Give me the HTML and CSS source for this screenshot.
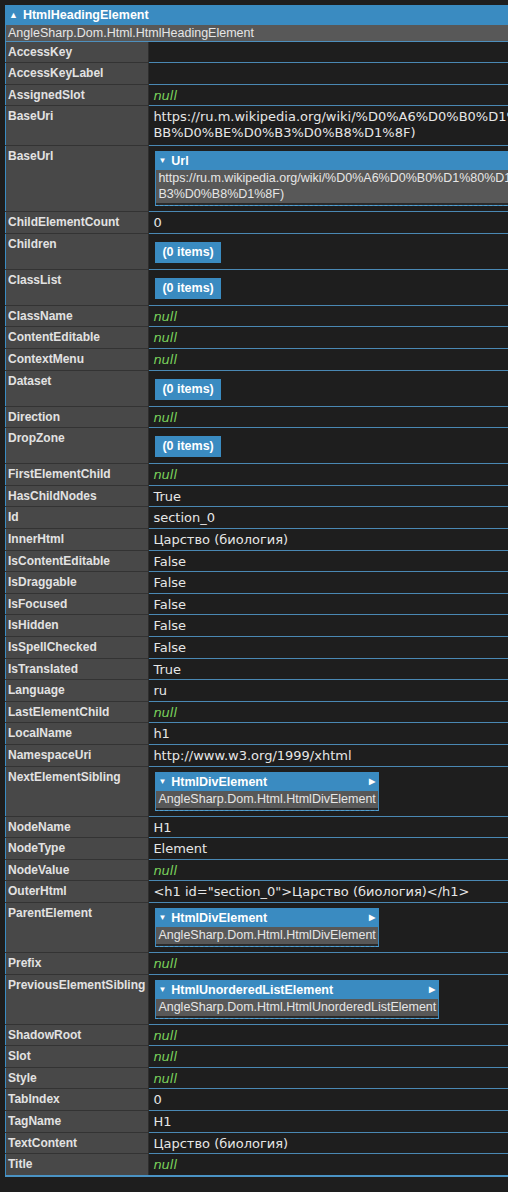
FILE: index.html
```html
<!DOCTYPE html>
<html>
<head>
<meta charset="utf-8">
<link rel="stylesheet" href="styles.css">
</head>
<body>
<table class="dump">
<thead>
<tr><td colspan="2" class="head"><span class="tri">▲</span>HtmlHeadingElement</td></tr>
<tr><td colspan="2" class="type">AngleSharp.Dom.Html.HtmlHeadingElement</td></tr>
</thead>
<tbody>
<tr><th>AccessKey</th><td></td></tr>
<tr><th>AccessKeyLabel</th><td></td></tr>
<tr><th>AssignedSlot</th><td><span class="null">null</span></td></tr>
<tr><th>BaseUri</th><td class="nw">https://ru.m.wikipedia.org/wiki/%D0%A6%D0%B0%D1%80%D1%81%D1%82%D0%B2%D0%BE_(%D0%B1%D0%B8%D0%BE%D0%<br>BB%D0%BE%D0%B3%D0%B8%D1%8F)</td></tr>
<tr><th>BaseUrl</th><td class="boxcell">
  <div class="box">
    <div class="bhead"><span class="dn">▼</span>Url</div>
    <div class="bbody">https://ru.m.wikipedia.org/wiki/%D0%A6%D0%B0%D1%80%D1%81%D1%82%D0%B2%D0%BE_(%D0%B1%D0%B8%D0%BE%D0%BB%D0%BE%D0%<br>B3%D0%B8%D1%8F)</div>
  </div>
</td></tr>
<tr><th>ChildElementCount</th><td>0</td></tr>
<tr><th>Children</th><td class="btncell"><span class="btn">(0 items)</span></td></tr>
<tr><th>ClassList</th><td class="btncell"><span class="btn">(0 items)</span></td></tr>
<tr><th>ClassName</th><td><span class="null">null</span></td></tr>
<tr><th>ContentEditable</th><td><span class="null">null</span></td></tr>
<tr><th>ContextMenu</th><td><span class="null">null</span></td></tr>
<tr><th>Dataset</th><td class="btncell"><span class="btn">(0 items)</span></td></tr>
<tr><th>Direction</th><td><span class="null">null</span></td></tr>
<tr><th>DropZone</th><td class="btncell"><span class="btn">(0 items)</span></td></tr>
<tr><th>FirstElementChild</th><td><span class="null">null</span></td></tr>
<tr><th>HasChildNodes</th><td>True</td></tr>
<tr><th>Id</th><td>section_0</td></tr>
<tr><th>InnerHtml</th><td>Царство (биология)</td></tr>
<tr><th>IsContentEditable</th><td>False</td></tr>
<tr><th>IsDraggable</th><td>False</td></tr>
<tr><th>IsFocused</th><td>False</td></tr>
<tr><th>IsHidden</th><td>False</td></tr>
<tr><th>IsSpellChecked</th><td>False</td></tr>
<tr><th>IsTranslated</th><td>True</td></tr>
<tr><th>Language</th><td>ru</td></tr>
<tr><th>LastElementChild</th><td><span class="null">null</span></td></tr>
<tr><th>LocalName</th><td>h1</td></tr>
<tr><th>NamespaceUri</th><td>http://www.w3.org/1999/xhtml</td></tr>
<tr><th>NextElementSibling</th><td class="boxcell">
  <div class="box">
    <div class="bhead"><span class="dn">▼</span>HtmlDivElement<span class="rt">▶</span></div>
    <div class="bbody">AngleSharp.Dom.Html.HtmlDivElement</div>
  </div>
</td></tr>
<tr><th>NodeName</th><td>H1</td></tr>
<tr><th>NodeType</th><td>Element</td></tr>
<tr><th>NodeValue</th><td><span class="null">null</span></td></tr>
<tr><th>OuterHtml</th><td>&lt;h1 id="section_0"&gt;Царство (биология)&lt;/h1&gt;</td></tr>
<tr><th>ParentElement</th><td class="boxcell">
  <div class="box">
    <div class="bhead"><span class="dn">▼</span>HtmlDivElement<span class="rt">▶</span></div>
    <div class="bbody">AngleSharp.Dom.Html.HtmlDivElement</div>
  </div>
</td></tr>
<tr><th>Prefix</th><td><span class="null">null</span></td></tr>
<tr><th>PreviousElementSibling</th><td class="boxcell">
  <div class="box">
    <div class="bhead"><span class="dn">▼</span>HtmlUnorderedListElement<span class="rt">▶</span></div>
    <div class="bbody">AngleSharp.Dom.Html.HtmlUnorderedListElement</div>
  </div>
</td></tr>
<tr><th>ShadowRoot</th><td><span class="null">null</span></td></tr>
<tr><th>Slot</th><td><span class="null">null</span></td></tr>
<tr><th>Style</th><td><span class="null">null</span></td></tr>
<tr><th>TabIndex</th><td>0</td></tr>
<tr><th>TagName</th><td>H1</td></tr>
<tr><th>TextContent</th><td>Царство (биология)</td></tr>
<tr><th>Title</th><td><span class="null">null</span></td></tr>
</tbody>
</table>
</body>
</html>
```

FILE: styles.css
```css
html, body {
  margin: 0;
  padding: 0;
  background: #1e1e1e;
  overflow: hidden;
}
body {
  padding: 5px;
  font-family: "Liberation Sans", Arial, sans-serif;
  font-size: 12.5px;
  color: #e4e4e4;
}
.dump {
  border-collapse: collapse;
  border-left: 1px solid #3b8cc2;
  border-bottom: 2px solid #4a93c4;
  white-space: nowrap;
}
.head {
  background: #3a8bc1;
  color: #fff;
  font-weight: bold;
  padding: 1px 4px 1px 3px;
  line-height: 16.5px;
  height: 16.5px;
  border-top: 1px solid #3a8bc1;
}
.tri {
  font-size: 9px;
  display: inline-block;
  margin-right: 5px;
  vertical-align: 1px;
}
.type {
  background: #585858;
  color: #e6e6e6;
  padding: 0 2px;
  line-height: 16px;
  border-bottom: 1px solid #4e8fbd;
}
th {
  background: #484848;
  color: #e2e2e2;
  font-weight: bold;
  font-size: 12px;
  text-align: left;
  vertical-align: top;
  width: 128px;
  padding: 2px 3px 2.6px 2px;
  line-height: 16px;
  border-bottom: 1px solid #333;
  border-right: 1px solid #2e2e2e;
}
tbody td {
  vertical-align: top;
  padding: 3px 4px 1.6px 4px;
  line-height: 16px;
  border-bottom: 1px solid #4a88b3;
  background: #1e1e1e;
  font-family: "DejaVu Sans", Verdana, sans-serif;
  font-size: 13px;
  color: #e6e6e6;
}
tbody td.nw {
  padding-bottom: 4px;
}
.null {
  color: #7bd35c;
  font-style: italic;
}
tbody td.btncell {
  padding: 8px 4px 6px 6px;
}
.btn {
  display: inline-block;
  background: #3a8bc1;
  color: #fff;
  font-family: "Liberation Sans", Arial, sans-serif;
  font-size: 12.5px;
  font-weight: bold;
  padding: 2px 7px;
  line-height: 17px;
}
tbody td.boxcell {
  padding: 5px 4px 5px 6px;
  font-family: "Liberation Sans", Arial, sans-serif;
  font-size: 12.5px;
}
.box {
  display: inline-block;
  border: 1px solid #3a8bc1;
  border-bottom: 1px dashed #5aa0cc;
  background: #3a8bc1;
  vertical-align: top;
}
.bhead {
  background: #3a8bc1;
  color: #fff;
  font-weight: bold;
  padding: 0 3px 0 2px;
  line-height: 18px;
  display: flex;
  align-items: center;
}
.dn {
  font-size: 8px;
  margin-right: 5px;
}
.rt {
  font-size: 8px;
  margin-left: auto;
  padding-left: 12px;
}
.bbody {
  background: #585858;
  color: #e6e6e6;
  padding: 0 2px 1px 2px;
  line-height: 16px;
  border-bottom: 2px solid #2a2a2a;
}
```
